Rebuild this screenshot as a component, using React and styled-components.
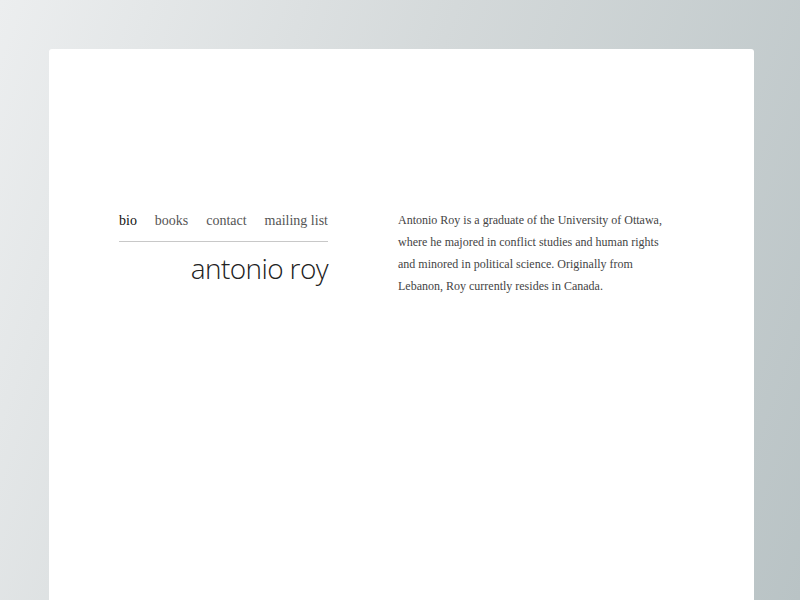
import React from "react";
import styled, { createGlobalStyle } from "styled-components";

const Global = createGlobalStyle`
  html, body { margin: 0; height: 100%; }
  body {
    background: linear-gradient(110deg, #eceeef 0%, #d4d9da 45%, #b9c3c5 100%);
    background-attachment: fixed;
    overflow: hidden;
  }
`;

const Page = styled.div`
  padding: 49px 46px 0 49px;
`;

const Card = styled.div`
  background: #fff;
  border-radius: 3px 3px 0 0;
  height: calc(100vh - 49px);
  padding: 161px 0 0 70px;
  box-sizing: border-box;
  display: flex;
  gap: 70px;
`;

const Left = styled.div`
  width: 209px;
`;

const Nav = styled.nav`
  display: flex;
  justify-content: space-between;
  font-family: "Liberation Serif", serif;
  font-size: 14px;
  color: #555;
  padding: 3px 0 12px;
  border-bottom: 1px solid #c8c8c8;
`;

const NavItem = styled.span`
  color: ${(p) => (p.$active ? "#111" : "#555")};
  white-space: nowrap;
`;

const Title = styled.h1`
  margin: 8px 0 0;
  text-align: right;
  font-family: "Open Sans", sans-serif;
  font-weight: 300;
  font-size: 28px;
  letter-spacing: -0.6px;
  color: #222;
  line-height: 36px;
`;

const Bio = styled.p`
  margin: -1px 0 0;
  width: 280px;
  font-family: "Liberation Serif", serif;
  font-size: 12px;
  line-height: 22px;
  color: #444;
`;

export default function App() {
  return (
    <>
      <Global />
      <Page>
        <Card>
          <Left>
            <Nav>
              <NavItem $active>bio</NavItem>
              <NavItem>books</NavItem>
              <NavItem>contact</NavItem>
              <NavItem>mailing list</NavItem>
            </Nav>
            <Title>antonio roy</Title>
          </Left>
          <Bio>
            Antonio Roy is a graduate of the University of Ottawa, where he majored in conflict
            studies and human rights and minored in political science. Originally from Lebanon,
            Roy currently resides in Canada.
          </Bio>
        </Card>
      </Page>
    </>
  );
}
